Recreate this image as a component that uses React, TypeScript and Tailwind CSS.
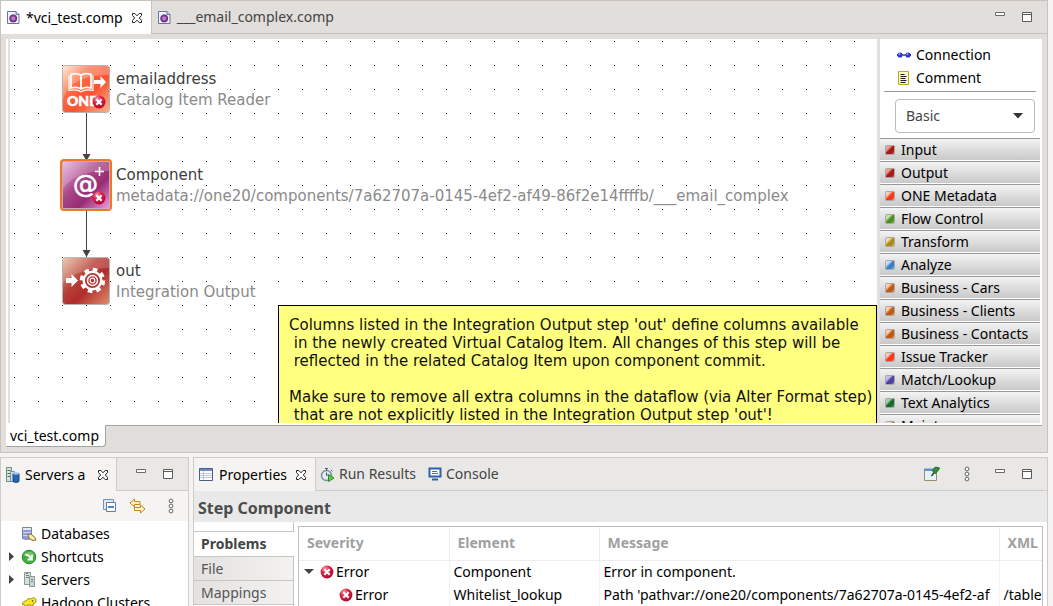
import { useState, type ReactNode } from 'react'
import clsx from 'clsx'

type PaletteGroup = { name: string; from: string; to: string }

const paletteGroups: PaletteGroup[] = [
  { name: 'Input', from: '#e8a090', to: '#a81818' },
  { name: 'Output', from: '#e8a090', to: '#a81818' },
  { name: 'ONE Metadata', from: '#ffc8b0', to: '#f83818' },
  { name: 'Flow Control', from: '#c8e0a8', to: '#4a9020' },
  { name: 'Transform', from: '#f0e0a0', to: '#b08818' },
  { name: 'Analyze', from: '#c8e0f8', to: '#3a80c8' },
  { name: 'Business - Cars', from: '#f8d0a8', to: '#c05818' },
  { name: 'Business - Clients', from: '#f8d0a8', to: '#c05818' },
  { name: 'Business - Contacts', from: '#f8d0a8', to: '#c05818' },
  { name: 'Issue Tracker', from: '#ffc8b0', to: '#f83818' },
  { name: 'Match/Lookup', from: '#c8c0e8', to: '#5040a0' },
  { name: 'Text Analytics', from: '#a8d0a8', to: '#186828' },
  { name: 'Maintenance', from: '#f0e0c0', to: '#a08050' },
]

const noteText = `Columns listed in the Integration Output step 'out' define columns available
 in the newly created Virtual Catalog Item. All changes of this step will be
 reflected in the related Catalog Item upon component commit.

Make sure to remove all extra columns in the dataflow (via Alter Format step)
 that are not explicitly listed in the Integration Output step 'out'!`

const problems = [
  { level: 0, severity: 'Error', element: 'Component', message: 'Error in component.', xml: '' },
  {
    level: 1,
    severity: 'Error',
    element: 'Whitelist_lookup',
    message: "Path 'pathvar://one20/components/7a62707a-0145-4ef2-af",
    xml: '/table',
  },
]

function ErrorBadge({ className }: { className?: string }) {
  return (
    <svg viewBox="0 0 14 14" className={clsx('h-3.5 w-3.5 shrink-0', className)}>
      <defs>
        <radialGradient id="err" cx="0.35" cy="0.25" r="0.8">
          <stop offset="0" stopColor="#f59aa8" />
          <stop offset="0.45" stopColor="#dc1f42" />
          <stop offset="1" stopColor="#b00428" />
        </radialGradient>
      </defs>
      <circle cx="7" cy="7" r="6.4" fill="url(#err)" />
      <path d="M4.3 4.2l5.4 5.6M9.7 4.2L4.3 9.8" stroke="#fff" strokeWidth="2.2" />
    </svg>
  )
}

function CloseIcon() {
  return (
    <svg viewBox="0 0 12 12" className="h-3 w-3">
      <path
        d="M1.5 1.5h2.3L6 3.8l2.2-2.3h2.3v2L8.3 6l2.2 2.4v2.1H8.2L6 8.2l-2.2 2.3H1.5V8.4L3.7 6 1.5 3.5z"
        fill="#fff"
        stroke="#222"
      />
    </svg>
  )
}

function CompFileIcon() {
  return (
    <svg viewBox="0 0 13 15" className="h-[15px] w-[13px] shrink-0">
      <path d="M.5 1.5h8.5l3 3v9H.5z" fill="#f0f5fc" stroke="#63789c" />
      <path d="M9 1.5v3h3" fill="#c5d3e8" stroke="#63789c" />
      <circle cx="6.2" cy="8.4" r="3.9" fill="#8c3f9e" />
      <circle cx="6.2" cy="8.4" r="1.8" fill="#b487c8" />
      <circle cx="6.2" cy="8.4" r="3.4" fill="none" stroke="#5c2478" strokeDasharray="1.4 1" />
    </svg>
  )
}

function MinimizeIcon() {
  return (
    <svg viewBox="0 0 12 12" className="h-3 w-3">
      <path d="M1.5 1.5h9v3h-9z" fill="#fff" stroke="#6a6a6a" />
    </svg>
  )
}

function MaximizeIcon() {
  return (
    <svg viewBox="0 0 12 12" className="h-3 w-3">
      <path d="M1.5 1.5h9v9h-9zM1.5 3.5h9" fill="#fff" stroke="#5a5a5a" />
    </svg>
  )
}

function MenuDotsIcon() {
  return (
    <svg viewBox="0 0 6 16" className="h-4 w-1.5">
      {[3, 8, 13].map((cy) => (
        <circle key={cy} cx="3" cy={cy} r="1.9" fill="#fff" stroke="#666" />
      ))}
    </svg>
  )
}

function ConnectionIcon() {
  return (
    <svg viewBox="0 0 16 8" className="h-2 w-4 shrink-0">
      <path d="M3 4h10" stroke="#777" strokeWidth="2" />
      <path d="M1 4h2M13 4h2" stroke="#2222a8" strokeWidth="2" />
      <circle cx="4" cy="4" r="2.6" fill="#2b35d8" />
      <circle cx="12" cy="4" r="2.6" fill="#2b35d8" />
      <circle cx="3.4" cy="3.2" r=".9" fill="#a9b0ff" />
      <circle cx="11.4" cy="3.2" r=".9" fill="#a9b0ff" />
    </svg>
  )
}

function CommentIcon() {
  return (
    <svg viewBox="0 0 12 14" className="h-3.5 w-3 shrink-0">
      <path d="M.5.5h10v13H.5z" fill="#ffffb4" stroke="#b4ac10" />
      <path d="M2.5 3.5h4M2.5 5.5h6M2.5 7.5h5M2.5 9.5h6M2.5 11.5h5" stroke="#222" />
    </svg>
  )
}

function PaletteSquare({ group, id }: { group: PaletteGroup; id: string }) {
  return (
    <svg viewBox="0 0 10 10" className="h-2.5 w-2.5 shrink-0">
      <defs>
        <linearGradient id={id} x1="0" y1="0" x2="1" y2="1">
          <stop offset="0" stopColor={group.from} />
          <stop offset="0.3" stopColor={group.from} />
          <stop offset="0.5" stopColor={group.to} />
          <stop offset="0.75" stopColor={group.to} />
          <stop offset="1" stopColor={group.from} />
        </linearGradient>
      </defs>
      <rect x=".5" y=".5" width="9" height="9" rx="1" fill={`url(#${id})`} stroke="#a8a8a8" />
    </svg>
  )
}

function ReaderArt() {
  return (
    <svg viewBox="0 0 48 48" className="h-12 w-12">
      <defs>
        <linearGradient id="reader" x1="0" y1="0" x2="1" y2="1">
          <stop offset="0" stopColor="#ffe8d0" />
          <stop offset="0.3" stopColor="#ff7048" />
          <stop offset="0.6" stopColor="#fb5230" />
          <stop offset="1" stopColor="#f5b890" />
        </linearGradient>
      </defs>
      <rect x=".5" y=".5" width="47" height="47" rx="3" fill="url(#reader)" stroke="#b9b5b2" />
      <path d="M1 1h46v9C28 10 8 14 1 34z" fill="#fff" opacity=".25" />
      <path
        d="M9 9.500c3.500-1.200 7-1 10 .8 3-1.800 6.500-2 10-.8v13.500c-3.500-1-7-.8-10 1-3-1.800-6.500-2-10-1zM19 10.300v14"
        fill="none"
        stroke="#fff"
        strokeWidth="1.800"
      />
      <path d="M7 10.500v15c5-1 9-.8 12 1.200 3-2 7-2.200 12-1.200v-15" fill="none" stroke="#fff" strokeWidth="1.200" />
      <path d="M32 15h6.500v-4l5.500 6-5.500 6v-4H32z" fill="#fff" />
      <text x="5" y="41" fontSize="14" fontWeight="900" fill="#fff" fontFamily="Lato, sans-serif" stroke="#fff" strokeWidth=".5">
        ONE
      </text>
    </svg>
  )
}

function ComponentArt() {
  return (
    <svg viewBox="0 0 48 48" className="h-12 w-12">
      <defs>
        <linearGradient id="component" x1="0" y1="0" x2="1" y2="1">
          <stop offset="0" stopColor="#f0b0e0" />
          <stop offset="0.4" stopColor="#a84888" />
          <stop offset="0.65" stopColor="#982c74" />
          <stop offset="1" stopColor="#f09ae0" />
        </linearGradient>
      </defs>
      <rect x=".5" y=".5" width="47" height="47" rx="1" fill="url(#component)" stroke="#c9a9c0" />
      <path d="M1 1h46v9C28 10 10 14 1 28z" fill="#fff" opacity=".2" />
      <path d="M37.500 6v9M33 10.500h9" stroke="#fff" strokeWidth="1.600" />
      <text x="11" y="32" fontSize="25" fill="#fff" stroke="#fff" strokeWidth=".7" fontFamily="DejaVu Sans, sans-serif">
        @
      </text>
    </svg>
  )
}

function OutputArt() {
  return (
    <svg viewBox="0 0 48 48" className="h-12 w-12">
      <defs>
        <linearGradient id="output" x1="0" y1="0" x2="1" y2="1">
          <stop offset="0" stopColor="#e8c0a0" />
          <stop offset="0.4" stopColor="#b84038" />
          <stop offset="0.6" stopColor="#b02c2c" />
          <stop offset="1" stopColor="#e0906c" />
        </linearGradient>
      </defs>
      <rect x=".5" y=".5" width="47" height="47" rx="3" fill="url(#output)" stroke="#b9b5b2" />
      <path d="M1 1h46v10C28 11 10 16 1 26z" fill="#fff" opacity=".18" />
      <path d="M4 21h5.500v-4l6.500 6.500-6.500 6.500v-4H4z" fill="#fff" />
      <circle cx="30.500" cy="23.500" r="11" fill="none" stroke="#fff" strokeWidth="3.500" strokeDasharray="4.600 4.040" />
      <circle cx="30.500" cy="23.500" r="8.800" fill="none" stroke="#fff" strokeWidth="2.500" />
      <circle cx="30.500" cy="23.500" r="5" fill="none" stroke="#fff" strokeWidth="1.500" />
      <circle cx="30.500" cy="23.500" r="2.300" fill="none" stroke="#fff" strokeWidth="1.200" />
    </svg>
  )
}

function DiagramStep({
  title,
  subtitle,
  selected,
  failed,
  className,
  children,
}: {
  title: string
  subtitle: string
  selected?: boolean
  failed?: boolean
  className: string
  children: ReactNode
}) {
  return (
    <div className={clsx('absolute left-[50px] flex gap-1 whitespace-nowrap', className)}>
      <div
        className={clsx(
          'relative h-[52px] w-[52px] shrink-0 rounded border-2',
          selected ? 'border-[#f07820]' : 'border-transparent',
        )}
      >
        {children}
        {failed && <ErrorBadge className="absolute right-1 bottom-1" />}
      </div>
      <div className="pt-1.5 font-['DejaVu_Sans',sans-serif] text-[15px] leading-[21px]">
        <p className="text-[#3c3c3c]">{title}</p>
        <p className="text-[#8a8a8a]">{subtitle}</p>
      </div>
    </div>
  )
}

function Diagram() {
  return (
    <div className="relative min-w-0 flex-1 overflow-hidden">
      <div className="absolute inset-0 mt-0.5 ml-0.5 bg-[radial-gradient(circle_at_2.5px_0.5px,#222_0.6px,transparent_0.7px)] bg-[size:24px_24px]" />
      <svg className="absolute top-0 left-[70px] h-64 w-3" viewBox="0 0 12 256">
        <path d="M6.500 73v48M6.500 170v48" stroke="#444" />
        <path d="M2.500 115h8l-4 7zM2.500 211h8l-4 7z" fill="#444" />
      </svg>
      <DiagramStep title="emailaddress" subtitle="Catalog Item Reader" failed className="top-6">
        <ReaderArt />
      </DiagramStep>
      <DiagramStep
        title="Component"
        subtitle="metadata://one20/components/7a62707a-0145-4ef2-af49-86f2e14ffffb/___email_complex"
        selected
        failed
        className="top-[120px]"
      >
        <ComponentArt />
      </DiagramStep>
      <DiagramStep title="out" subtitle="Integration Output" className="top-[216px]">
        <OutputArt />
      </DiagramStep>
      <div className="absolute top-[266px] right-0 left-[268px] h-32 overflow-hidden border border-black bg-[#ffff80] px-2.5 pt-2.5 font-['DejaVu_Sans',sans-serif] text-[15px] leading-[18px] whitespace-pre text-[#111]">
        {noteText}
      </div>
    </div>
  )
}

function Palette() {
  return (
    <aside className="flex w-[165px] shrink-0 flex-col border-l-[3px] border-[#e1dedb] bg-white pr-0.5">
      <div className="mx-1 flex flex-col border-b border-[#999] pt-1 pb-0.5 leading-[23px]">
        <button className="flex items-center gap-1 pl-3 text-left">
          <ConnectionIcon />
          Connection
        </button>
        <button className="flex items-center gap-1 pl-3.5 text-left">
          <CommentIcon />
          <span className="pl-0.5">Comment</span>
        </button>
      </div>
      <div className="relative mt-[7px] mb-[5px] ml-[15px] mr-[5px]">
        <select
          aria-label="Palette"
          className="h-[34px] w-full appearance-none rounded border border-[#bbb] bg-white pl-2.5 text-[#444]"
        >
          <option>Basic</option>
        </select>
        <svg viewBox="0 0 10 6" className="pointer-events-none absolute top-3.5 right-3 h-1.5 w-2.5">
          <path d="M0 0h10L5 5.500z" fill="#333" />
        </svg>
      </div>
      <ul className="min-h-0 flex-1 overflow-hidden">
        {paletteGroups.map((group, i) => (
          <li key={group.name}>
            <button className="flex h-[23px] w-full items-center gap-1.5 border-t border-b border-t-[#999] border-b-white bg-linear-to-b from-[#f3f3f3] to-[#c9c9c9] pl-[5px] text-left whitespace-nowrap">
              <PaletteSquare group={group} id={`group-${i}`} />
              {group.name}
            </button>
          </li>
        ))}
      </ul>
    </aside>
  )
}

function EditorPane() {
  const [tab, setTab] = useState('vci')
  return (
    <section className="flex min-h-0 flex-col border border-[#c9c3bc] bg-[#e1dedb]">
      <div className="flex h-[33px] shrink-0 items-stretch border-b border-[#c9c3bc] leading-6">
        <button
          onClick={() => setTab('vci')}
          className={clsx(
            'flex items-center gap-1.5 border-r border-[#c9c3bc] pr-2 pl-1.5',
            tab === 'vci' && '-mb-px bg-white',
          )}
        >
          <CompFileIcon />
          <span className="pr-0.5">*vci_test.comp</span>
          <CloseIcon />
        </button>
        <button
          onClick={() => setTab('email')}
          className={clsx('flex items-center gap-1.5 px-1.5 text-[#444]', tab === 'email' && '-mb-px bg-white')}
        >
          <CompFileIcon />
          ___email_complex.comp
        </button>
        <div className="ml-auto flex items-center gap-[15px] pr-3.5">
          <button aria-label="Minimize">
            <MinimizeIcon />
          </button>
          <button aria-label="Maximize">
            <MaximizeIcon />
          </button>
        </div>
      </div>
      <div className="mx-[5px] mt-[5px] flex min-h-0 flex-1 border-b border-[#a5a3a1] bg-white pb-0.5">
        <div className="ml-0.5 flex min-w-0 flex-1 border-l-2 border-[#e1dedb]">
          <Diagram />
          <Palette />
        </div>
      </div>
      <div className="flex h-[26px] shrink-0 pl-[5px]">
        <button className="-mt-px h-[22px] rounded-br border-r border-b border-[#a5a3a1] bg-white pr-1.5 pl-1 leading-5">
          vci_test.comp
        </button>
      </div>
    </section>
  )
}

function DatabasesIcon() {
  return (
    <svg viewBox="0 0 16 16" className="h-4 w-4">
      <path d="M1.500 1.500h9v11c-2 1-7 1-9 0z" fill="#8e9ad0" stroke="#7480b0" />
      <path d="M2 2h8v2H2z" fill="#e4e8f7" />
      <path d="M2 6c2 1 6 1 8 0M2 9c2 1 6 1 8 0" fill="none" stroke="#dfe3f4" />
      <path d="M6.500 8l2 .5 1.500-.5 4 3.500 1 2.500-3 .5-3.500-1.500z" fill="#f7e28c" stroke="#8a7438" />
      <path d="M9 9.500l4 3.500" stroke="#fff" />
    </svg>
  )
}

function ShortcutsIcon() {
  return (
    <svg viewBox="0 0 16 16" className="h-4 w-4">
      <circle cx="8" cy="8" r="6.800" fill="#3fae3a" stroke="#2a8a2a" />
      <path d="M2.500 6C4 2 12 2 13.500 6 10 8 6 8 2.500 6z" fill="#fff" opacity=".3" />
      <path d="M4.500 6c2-.5 4 1 5.500 3.500M11 6v4.500H6.500" fill="none" stroke="#fff" strokeWidth="1.800" />
    </svg>
  )
}

function ServersIcon() {
  return (
    <svg viewBox="0 0 16 16" className="h-4 w-4">
      <path d="M3.500.500h6v12h-6z" fill="#d4e4dc" stroke="#8b998f" />
      <path d="M8.500 4.500h5v10h-5z" fill="#c5d6d4" stroke="#8b998f" />
      <path d="M5 3.500h3M5 5.500h3M10 7.500h2M10 9.500h2" stroke="#6f7f86" />
      <path d="M5 1.500h2" stroke="#35a035" />
    </svg>
  )
}

function HadoopIcon() {
  return (
    <svg viewBox="0 0 16 16" className="h-4 w-4">
      <path
        d="M1 9c1-2 2-3 4-3 1-2 3-3 5-2 2-2 5-1 5 1s-1 4-3 4v3h-2v-2H6v3H4v-3L1 9z"
        fill="#f5ea1c"
        stroke="#9b8c10"
      />
      <circle cx="11.500" cy="6" r=".8" fill="#333" />
    </svg>
  )
}

function ServersTabIcon() {
  return (
    <svg viewBox="0 0 15 16" className="h-4 w-[15px] shrink-0">
      <path d="M1.500.500h5v14h-5z" fill="#d5e8d8" stroke="#6d8b80" />
      <path d="M2.500 3.500h3M2.500 6.500h3M2.500 9.500h3" stroke="#44705c" />
      <path d="M5.500 4.500h4v10h-4z" fill="#d8e2ee" stroke="#7b8ca8" />
      <path d="M8 6.500h6v8c-1.500 1.200-4.500 1.200-6 0z" fill="#2c66b0" stroke="#1d4785" />
      <ellipse cx="11" cy="6.500" rx="3" ry="1.200" fill="#9cc2ee" />
    </svg>
  )
}

const treeItems = [
  { name: 'Databases', icon: <DatabasesIcon />, expandable: false },
  { name: 'Shortcuts', icon: <ShortcutsIcon />, expandable: true },
  { name: 'Servers', icon: <ServersIcon />, expandable: true },
  { name: 'Hadoop Clusters', icon: <HadoopIcon />, expandable: false },
]

function ServersPane() {
  return (
    <section className="flex w-[189px] shrink-0 flex-col overflow-hidden border border-b-0 border-[#cfcbc6] bg-[#f5f4f2]">
      <div className="flex h-[33px] shrink-0">
        <button className="flex w-[115px] items-center gap-1 pl-1 whitespace-nowrap">
          <ServersTabIcon />
          <span className="pl-px">Servers a</span>
          <span className="ml-auto pr-[7px]">
            <CloseIcon />
          </span>
        </button>
        <div className="flex flex-1 items-center justify-end gap-[15px] border-b border-l border-[#cfcbc6] bg-[#e9e8e6] pr-3.5">
          <button aria-label="Minimize">
            <MinimizeIcon />
          </button>
          <button aria-label="Maximize">
            <MaximizeIcon />
          </button>
        </div>
      </div>
      <div className="flex h-[30px] shrink-0 items-center justify-end pr-3.5">
        <button aria-label="Collapse All" className="mr-3">
          <svg viewBox="0 0 14 14" className="h-3.5 w-3.5">
            <path d="M.500.500h10v10H.500z" fill="#dce9f5" stroke="#7593b5" />
            <path d="M3.500 3.500h9v9h-9z" fill="#fff" stroke="#5f80a6" />
            <path d="M5 8h6" stroke="#1c5a9c" strokeWidth="1.500" />
          </svg>
        </button>
        <button aria-label="Link with Editor" className="mr-[22px]">
          <svg viewBox="0 0 17 16" className="h-4 w-[17px]">
            <path d="M1 5l4.500-4v2.500H11v3H5.500V9z" fill="#fff2c4" stroke="#c08820" />
            <path d="M16 11l-4.500-4v2.500H5.500v3h6V15z" fill="#fff2c4" stroke="#c08820" />
          </svg>
        </button>
        <button aria-label="View Menu">
          <MenuDotsIcon />
        </button>
      </div>
      <ul className="min-h-0 flex-1 overflow-hidden bg-white pt-px">
        {treeItems.map((item) => (
          <li key={item.name} className="flex h-[23px] items-center whitespace-nowrap">
            <span className="w-5 shrink-0 pl-2">
              {item.expandable && (
                <svg viewBox="0 0 5 9" className="h-[9px] w-[5px]">
                  <path d="M0 0v9l5-4.500z" fill="#444" />
                </svg>
              )}
            </span>
            {item.icon}
            <span className="pl-1">{item.name}</span>
          </li>
        ))}
      </ul>
    </section>
  )
}

function ProblemsTable() {
  return (
    <div className="mt-1 mr-1 min-w-0 flex-1 overflow-hidden border border-b-0 border-[#bfbdbb]">
      <table className="w-full table-fixed border-collapse text-left whitespace-nowrap">
        <colgroup>
          <col className="w-[150px]" />
          <col className="w-[150px]" />
          <col />
          <col className="w-[43px]" />
        </colgroup>
        <thead>
          <tr className="h-[33px] border-b border-[#ececec] text-[#a0a0a0]">
            <th className="border-r border-[#ececec] pl-2">Severity</th>
            <th className="border-r border-[#ececec] pl-2">Element</th>
            <th className="border-r border-[#ececec] pl-2">Message</th>
            <th className="overflow-hidden pl-2">XML</th>
          </tr>
        </thead>
        <tbody>
          {problems.map((problem) => (
            <tr key={problem.element} className="h-[23px]">
              <td className="border-r border-[#f3f3f3]">
                <span className={clsx('flex items-center', problem.level === 0 ? 'pl-[5px]' : 'pl-10')}>
                  {problem.level === 0 && (
                    <svg viewBox="0 0 10 5" className="mr-1.5 h-[5px] w-2.5">
                      <path d="M0 0h10L5 5z" fill="#444" />
                    </svg>
                  )}
                  <ErrorBadge className="mr-0.5" />
                  {problem.severity}
                </span>
              </td>
              <td className="border-r border-[#f3f3f3] pl-1">{problem.element}</td>
              <td className="border-r border-[#f3f3f3] pl-1">
                <div className="overflow-hidden">{problem.message}</div>
              </td>
              <td className="overflow-hidden pl-1">{problem.xml}</td>
            </tr>
          ))}
        </tbody>
      </table>
    </div>
  )
}

function PropertiesPane() {
  return (
    <section className="flex min-w-0 flex-1 flex-col overflow-hidden border border-b-0 border-[#cfcbc6] bg-white">
      <div className="flex h-[33px] shrink-0 bg-[#e9e8e6] text-[#444]">
        <button className="flex items-center gap-1.5 border-r border-[#cfcbc6] bg-[#f5f4f2] pr-2 pl-[5px] text-black">
          <svg viewBox="0 0 14 13" className="h-[13px] w-3.5">
            <path d="M.500.500h13v12H.500z" fill="#fff" stroke="#4a5f85" />
            <path d="M1 1h12v2H1z" fill="#7189b8" />
            <path d="M4.500 3v9M1 5.500h12M1 7.500h12M1 9.500h12" stroke="#b8c5dc" />
          </svg>
          <span className="pr-0.5">Properties</span>
          <CloseIcon />
        </button>
        <div className="flex flex-1 items-center gap-3 border-b border-[#cfcbc6] pl-1">
          <button className="flex items-center gap-1">
            <svg viewBox="0 0 15 15" className="h-[15px] w-[15px]">
              <circle cx="6.500" cy="8.500" r="5" fill="#e5edf3" stroke="#7590a5" strokeWidth="1.500" />
              <path d="M5 1.500h3M6.500 2v2M11 3l1.500 1.500M6.500 5.500v3l2-1" stroke="#4c6070" fill="none" />
              <path d="M8.500 7.500l5.500 3.500-5.500 3.500z" fill="#62d044" stroke="#2c8c22" />
            </svg>
            Run Results
          </button>
          <button className="flex items-center gap-1">
            <svg viewBox="0 0 14 14" className="h-3.5 w-3.5">
              <path d="M1.500 1.500h11v8h-11z" fill="#fff" stroke="#2f5fae" strokeWidth="2" />
              <path d="M4 4.500h5M4 6.500h6" stroke="#4c6aa8" />
              <path d="M4 12.500h6" stroke="#2f5fae" strokeWidth="2" />
            </svg>
            Console
          </button>
          <div className="ml-auto flex items-center pr-3.5">
            <button aria-label="Pin" className="mr-6">
              <svg viewBox="0 0 17 16" className="h-4 w-[17px]">
                <path d="M1.500 3.500h12v11h-12z" fill="#e4f3fb" stroke="#9a8c68" />
                <path d="M1 2.500h12v2.500H1z" fill="#5f94c8" />
                <path d="M8.500 10l3-4" stroke="#444" strokeWidth="1.500" />
                <path d="M10 3.500l2.500-2.500 4 1-1 2-3 3.500-2.500-1.500z" fill="#359035" stroke="#1d6b28" />
              </svg>
            </button>
            <button aria-label="View Menu" className="mr-6">
              <MenuDotsIcon />
            </button>
            <button aria-label="Minimize" className="mr-[15px]">
              <MinimizeIcon />
            </button>
            <button aria-label="Maximize">
              <MaximizeIcon />
            </button>
          </div>
        </div>
      </div>
      <h2 className="h-[31px] shrink-0 bg-[#e9e9e9] pl-1 text-base leading-[34px] font-bold text-[#4c4c4c]">
        Step Component
      </h2>
      <div className="flex min-h-0 flex-1">
        <nav className="mr-1 flex w-[100px] shrink-0 flex-col text-[#555]">
          <div className="h-[10px] shrink-0 border-r border-b border-[#c9c5c1]" />
          <button className="h-6 shrink-0 pl-[7px] text-left font-bold text-[#444]">Problems</button>
          <button className="h-6 shrink-0 border-t border-r border-[#c9c5c1] bg-linear-to-r from-[#e4e2e0] to-[#f3f2f1] pl-[7px] text-left">
            File
          </button>
          <button className="h-6 shrink-0 border-t border-r border-[#c9c5c1] bg-linear-to-r from-[#e4e2e0] to-[#f3f2f1] pl-[7px] text-left">
            Mappings
          </button>
          <div className="flex-1 border-t border-r border-[#c9c5c1]" />
        </nav>
        <ProblemsTable />
      </div>
    </section>
  )
}

export default function App() {
  return (
    <div className="grid h-screen grid-cols-1 grid-rows-[minmax(0,1fr)_149px] gap-1 overflow-hidden bg-[#f5f4f2] pr-[5px] font-['Noto_Sans',sans-serif] text-sm text-black">
      <EditorPane />
      <div className="flex min-h-0 gap-1">
        <ServersPane />
        <PropertiesPane />
      </div>
    </div>
  )
}
